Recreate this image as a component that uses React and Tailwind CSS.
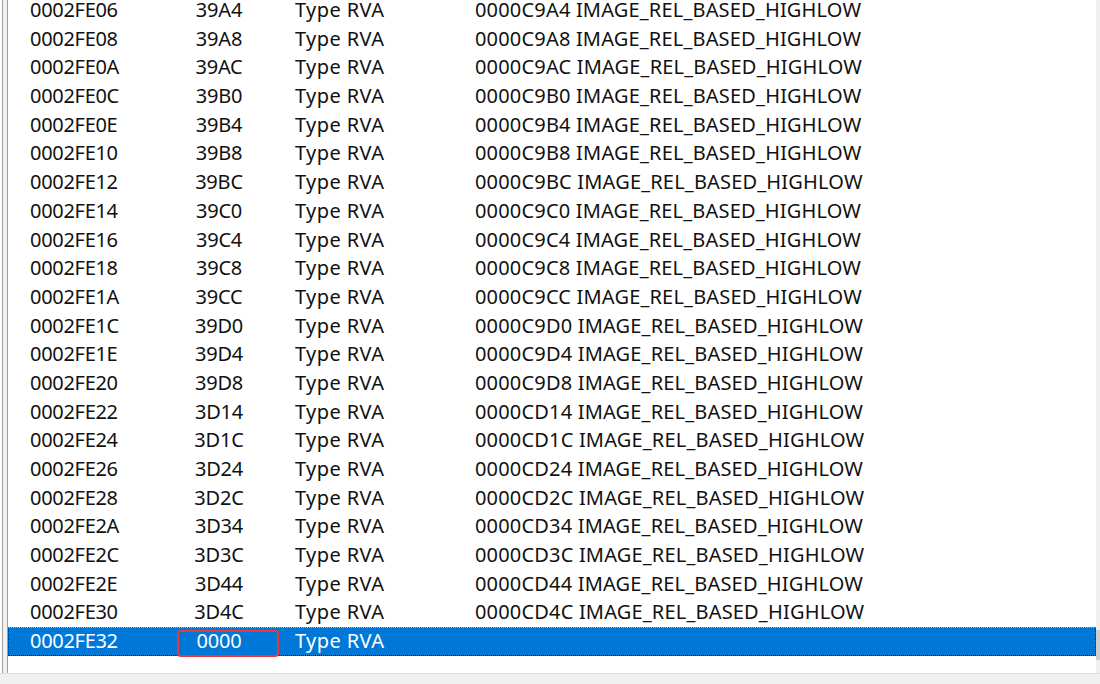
const rows = [
  ['0002FE06', '39A4', '0000C9A4'],
  ['0002FE08', '39A8', '0000C9A8'],
  ['0002FE0A', '39AC', '0000C9AC'],
  ['0002FE0C', '39B0', '0000C9B0'],
  ['0002FE0E', '39B4', '0000C9B4'],
  ['0002FE10', '39B8', '0000C9B8'],
  ['0002FE12', '39BC', '0000C9BC'],
  ['0002FE14', '39C0', '0000C9C0'],
  ['0002FE16', '39C4', '0000C9C4'],
  ['0002FE18', '39C8', '0000C9C8'],
  ['0002FE1A', '39CC', '0000C9CC'],
  ['0002FE1C', '39D0', '0000C9D0'],
  ['0002FE1E', '39D4', '0000C9D4'],
  ['0002FE20', '39D8', '0000C9D8'],
  ['0002FE22', '3D14', '0000CD14'],
  ['0002FE24', '3D1C', '0000CD1C'],
  ['0002FE26', '3D24', '0000CD24'],
  ['0002FE28', '3D2C', '0000CD2C'],
  ['0002FE2A', '3D34', '0000CD34'],
  ['0002FE2C', '3D3C', '0000CD3C'],
  ['0002FE2E', '3D44', '0000CD44'],
  ['0002FE30', '3D4C', '0000CD4C'],
];

const Row = ({ offset, value, info, selected }) => (
  <div
    className={
      'flex items-center h-[28.7px] shrink-0 ' +
      (selected
        ? 'bg-[#0078d7] text-white border border-dotted border-[#222] border-t-[#e0a070]'
        : 'text-[#111] border border-transparent')
    }
  >
    <div className="w-[170px] pl-[21px] tracking-[-0.3px]">{offset}</div>
    <div className="relative w-[80px] text-center tracking-[-0.2px]">
      {value}
      {selected && (
        <div className="absolute left-[-2px] top-[-1px] w-[102px] h-[27px] border-2 border-[#e8383d] rounded-[4px]" />
      )}
    </div>
    <div className="w-[180px] pl-[36px] tracking-[0.4px]">Type RVA</div>
    {info && <div className="pl-[36px] tracking-[0.18px]">{info} IMAGE_REL_BASED_HIGHLOW</div>}
  </div>
);

export default function App() {
  return (
    <div
      className="w-[1100px] h-[684px] bg-[#f0f0f0] overflow-hidden flex flex-col text-[20px] leading-none"
      style={{ fontFamily: '"Noto Sans", "Open Sans", sans-serif' }}
    >
      <div className="flex h-[674px] border-b border-[#dcdcdc]">
        <div className="w-[8px] flex bg-white">
          <div className="w-[2px]" />
          <div className="w-[1px] bg-[#a0a0a0]" />
          <div className="w-[4px] bg-[#f0f0f0]" />
          <div className="w-[1px] bg-[#a0a0a0]" />
        </div>
        <div className="flex-1 bg-white overflow-hidden">
          <div className="flex flex-col -mt-[4.3px]">
            {rows.map((r) => (
              <Row key={r[0]} offset={r[0]} value={r[1]} info={r[2]} />
            ))}
            <Row offset="0002FE32" value="0000" selected />
          </div>
        </div>
        <div className="w-[4px] flex flex-col bg-[#f0f0f0]">
          <div className="h-[630px]" />
          <div className="h-[30px] bg-[#cdcdcd]" />
        </div>
      </div>
    </div>
  );
}
